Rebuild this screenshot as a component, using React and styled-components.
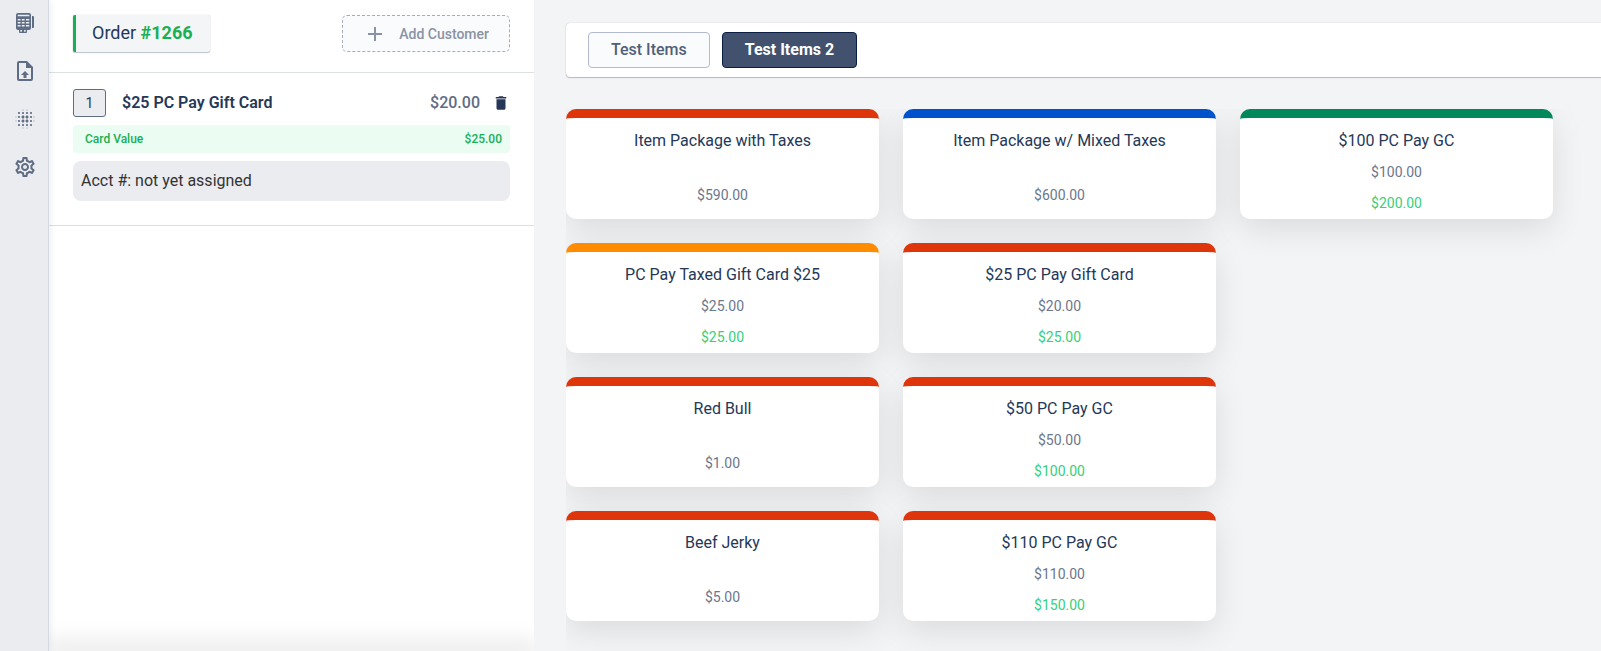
import React, { useState } from "react";
import styled, { createGlobalStyle } from "styled-components";
import { MdAdd, MdBlurOn, MdDelete, MdOutlineSettings } from "react-icons/md";

const GlobalStyle = createGlobalStyle`
    * {
        box-sizing: border-box;
    }

    body {
        margin: 0;
        background: #f3f4f6;
        color: #253858;
        font-family: Roboto, "Liberation Sans", sans-serif;
        font-size: 16px;
        line-height: 24px;
    }

    button {
        font: inherit;
        cursor: pointer;
    }
`
const Layout = styled.div`
    display: flex;
    height: 100vh;
    overflow: hidden;
`
const Sidebar = styled.nav`
    flex: none;
    padding: 11px 11px 0 13px;
    display: flex;
    flex-direction: column;
    gap: 24px;
    background: #ebecf0;
    border-right: 1px solid #d5d9e0;
    box-shadow: 0 0 8px rgba(9, 30, 66, 0.1);
    z-index: 1;
`
const SidebarButton = styled.button`
    display: flex;
    width: 24px;
    height: 24px;
    padding: 0;
    border: none;
    background: none;
    color: #5e6c84;
`
const OrderPanel = styled.section`
    flex: none;
    width: 485px;
    display: flex;
    flex-direction: column;
    background: #ffffff;
`
const OrderHeader = styled.header`
    display: flex;
    justify-content: space-between;
    align-items: center;
    padding: 15px 24px 20px;
    border-bottom: 1px solid #dcdfe4;
`
const OrderTag = styled.h1`
    margin: 0;
    padding: 6px 17px 7px 16px;
    border-left: 3px solid #17b055;
    border-radius: 2px;
    background: #f4f5f7;
    box-shadow: 0 1px 1px rgba(9, 30, 66, 0.25), 0 0 1px rgba(9, 30, 66, 0.31);
    font-size: 18px;
    font-weight: 400;

    strong {
        color: #17b055;
        font-weight: 700;
    }
`
const AddCustomer = styled.button`
    display: flex;
    align-items: center;
    gap: 12px;
    height: 37px;
    padding: 0 20px;
    border: 1px dashed #a5adba;
    border-radius: 5px;
    background: #fafbfc;
    color: #8993a4;
    font-size: 14px;
    font-weight: 500;
`
const OrderLine = styled.article`
    display: flex;
    flex-direction: column;
    gap: 8px;
    padding: 16px 24px 24px;
    border-bottom: 1px solid #dcdfe4;
`
const LineRow = styled.div`
    display: flex;
    align-items: center;
`
const Quantity = styled.button`
    width: 33px;
    height: 28px;
    padding: 0;
    border: 1px solid #5e6c84;
    border-radius: 3px;
    background: #ebecf0;
    color: #253858;
    font-size: 14px;
`
const LineName = styled.h2`
    flex: 1;
    margin: 0 16px;
    font-size: 16px;
    font-weight: 600;
`
const LinePrice = styled.span`
    color: #5e6c84;
    font-weight: 500;
`
const DeleteButton = styled.button`
    display: flex;
    margin-left: 12px;
    padding: 0;
    border: none;
    background: none;
    color: #253858;
`
const CardValue = styled.div`
    display: flex;
    justify-content: space-between;
    padding: 2px 8px 2px 12px;
    border-radius: 4px;
    background: #ebfcf3;
    color: #17b055;
    font-size: 12px;
    font-weight: 500;
`
const Account = styled.p`
    margin: 0;
    padding: 8px;
    border-radius: 8px;
    background: #ebecf0;
    color: #333333;
`
const OrderFooter = styled.footer`
    margin-top: auto;
    box-shadow: 0 0 24px 6px rgba(0, 0, 0, 0.15);
    clip-path: inset(-40px 0 0 0);
`
const Main = styled.main`
    flex: 1;
    min-width: 0;
    padding: 23px 0 0 32px;
`
const Tabs = styled.div`
    display: flex;
    gap: 12px;
    padding: 9px 22px;
    border-radius: 4px 0 0 4px;
    background: #ffffff;
    box-shadow: 0 1px 1px rgba(9, 30, 66, 0.25), 0 0 1px rgba(9, 30, 66, 0.31);
`
const Tab = styled.button`
    height: 36px;
    padding: 0 22px;
    border: 1px solid ${props => props.$active ? '#091e42' : '#b3bacb'};
    border-radius: 4px;
    background: ${props => props.$active ? '#42526e' : '#fafbfc'};
    color: ${props => props.$active ? '#ffffff' : '#505f79'};
    font-weight: ${props => props.$active ? 700 : 500};
`
/* columns fill top to bottom, overflow trims the card shadows */
const ItemGrid = styled.div`
    display: grid;
    grid-auto-flow: column;
    grid-template-rows: repeat(4, auto);
    grid-template-columns: repeat(3, 1fr);
    gap: 24px;
    margin-top: 32px;
    padding: 0 48px 32px 0;
    overflow: hidden;
`
const ItemCard = styled.button`
    display: flex;
    flex-direction: column;
    justify-content: space-between;
    align-items: center;
    height: 110px;
    padding: ${props => props.$hasValue ? '13px 16px 6px' : '13px 16px 14px'};
    border: none;
    border-top: 9px solid ${props => props.$color};
    border-radius: 10px;
    background: #ffffff;
    color: #253858;
    line-height: 20px;
    box-shadow: 0 10px 32px rgba(0, 0, 0, 0.1);
`
const ItemPrice = styled.span`
    color: ${props => props.$value ? '#36d07a' : '#6b778c'};
    font-size: 14px;
`

const RED = '#de350b'
const items = [
    { name: 'Item Package with Taxes', price: '$590.00', color: RED },
    { name: 'PC Pay Taxed Gift Card $25', price: '$25.00', value: '$25.00', color: '#ff8b00' },
    { name: 'Red Bull', price: '$1.00', color: RED },
    { name: 'Beef Jerky', price: '$5.00', color: RED },
    { name: 'Item Package w/ Mixed Taxes', price: '$600.00', color: '#0052cc' },
    { name: '$25 PC Pay Gift Card', price: '$20.00', value: '$25.00', color: RED },
    { name: '$50 PC Pay GC', price: '$50.00', value: '$100.00', color: RED },
    { name: '$110 PC Pay GC', price: '$110.00', value: '$150.00', color: RED },
    { name: '$100 PC Pay GC', price: '$100.00', value: '$200.00', color: '#00875a' }
]

const TerminalIcon = () => (
    <svg width="24" height="24" viewBox="0 0 24 24" fill="currentColor">
        <path
            fillRule="evenodd"
            d="M5 2h11a2 2 0 0 1 2 2v13a2 2 0 0 1-2 2H5a2 2 0 0 1-2-2V4a2 2 0 0 1 2-2ZM4.7 3.7v1.6h11.6V3.7ZM4.7 8v1.6h2.8V8ZM8.8 8v1.6h2.8V8ZM12.9 8v1.6h3.4V8ZM4.7 11v1.6h2.8V11ZM8.8 11v1.6h2.8V11ZM12.9 11v1.6h3.4V11ZM4.7 14v1.6h2.8V14ZM8.8 14v1.6h2.8V14ZM12.9 14v1.6h3.4V14Z"
        />
        <path d="M19 5h1a1 1 0 0 1 1 1v10a1 1 0 0 1-1 1h-1Z"/>
        <path fillRule="evenodd" d="M6 19h8v2a1 1 0 0 1-1 1H7a1 1 0 0 1-1-1ZM7.3 19v1.7h1.6V19ZM11.1 19v1.7h1.6V19Z"/>
    </svg>
)

const FileUploadIcon = () => (
    <svg width="24" height="24" viewBox="0 0 24 24" fill="currentColor">
        <path d="M14,2L20,8V20A2,2 0 0,1 18,22H6A2,2 0 0,1 4,20V4A2,2 0 0,1 6,2H14M18,20V9H13V4H6V20H18M12,12L16,16H13.5V19H10.5V16H8L12,12Z"/>
    </svg>
)

export default function App() {
    const [tab, setTab] = useState('Test Items 2')

    return (
        <Layout>
            <GlobalStyle/>
            <Sidebar>
                <SidebarButton aria-label="Terminal"><TerminalIcon/></SidebarButton>
                <SidebarButton aria-label="Upload file"><FileUploadIcon/></SidebarButton>
                <SidebarButton aria-label="Grid"><MdBlurOn size={24}/></SidebarButton>
                <SidebarButton aria-label="Settings"><MdOutlineSettings size={24}/></SidebarButton>
            </Sidebar>

            <OrderPanel>
                <OrderHeader>
                    <OrderTag>Order <strong>#1266</strong></OrderTag>
                    <AddCustomer><MdAdd size={24}/>Add Customer</AddCustomer>
                </OrderHeader>
                <OrderLine>
                    <LineRow>
                        <Quantity>1</Quantity>
                        <LineName>$25 PC Pay Gift Card</LineName>
                        <LinePrice>$20.00</LinePrice>
                        <DeleteButton aria-label="Remove item"><MdDelete size={18}/></DeleteButton>
                    </LineRow>
                    <CardValue>
                        <span>Card Value</span>
                        <span>$25.00</span>
                    </CardValue>
                    <Account>Acct #: not yet assigned</Account>
                </OrderLine>
                <OrderFooter/>
            </OrderPanel>

            <Main>
                <Tabs>
                    {['Test Items', 'Test Items 2'].map(name => (
                        <Tab key={name} $active={name === tab} onClick={() => setTab(name)}>{name}</Tab>
                    ))}
                </Tabs>
                <ItemGrid>
                    {items.map(item => (
                        <ItemCard key={item.name} $color={item.color} $hasValue={!!item.value}>
                            <span>{item.name}</span>
                            <ItemPrice>{item.price}</ItemPrice>
                            {item.value && <ItemPrice $value>{item.value}</ItemPrice>}
                        </ItemCard>
                    ))}
                </ItemGrid>
            </Main>
        </Layout>
    )
}
